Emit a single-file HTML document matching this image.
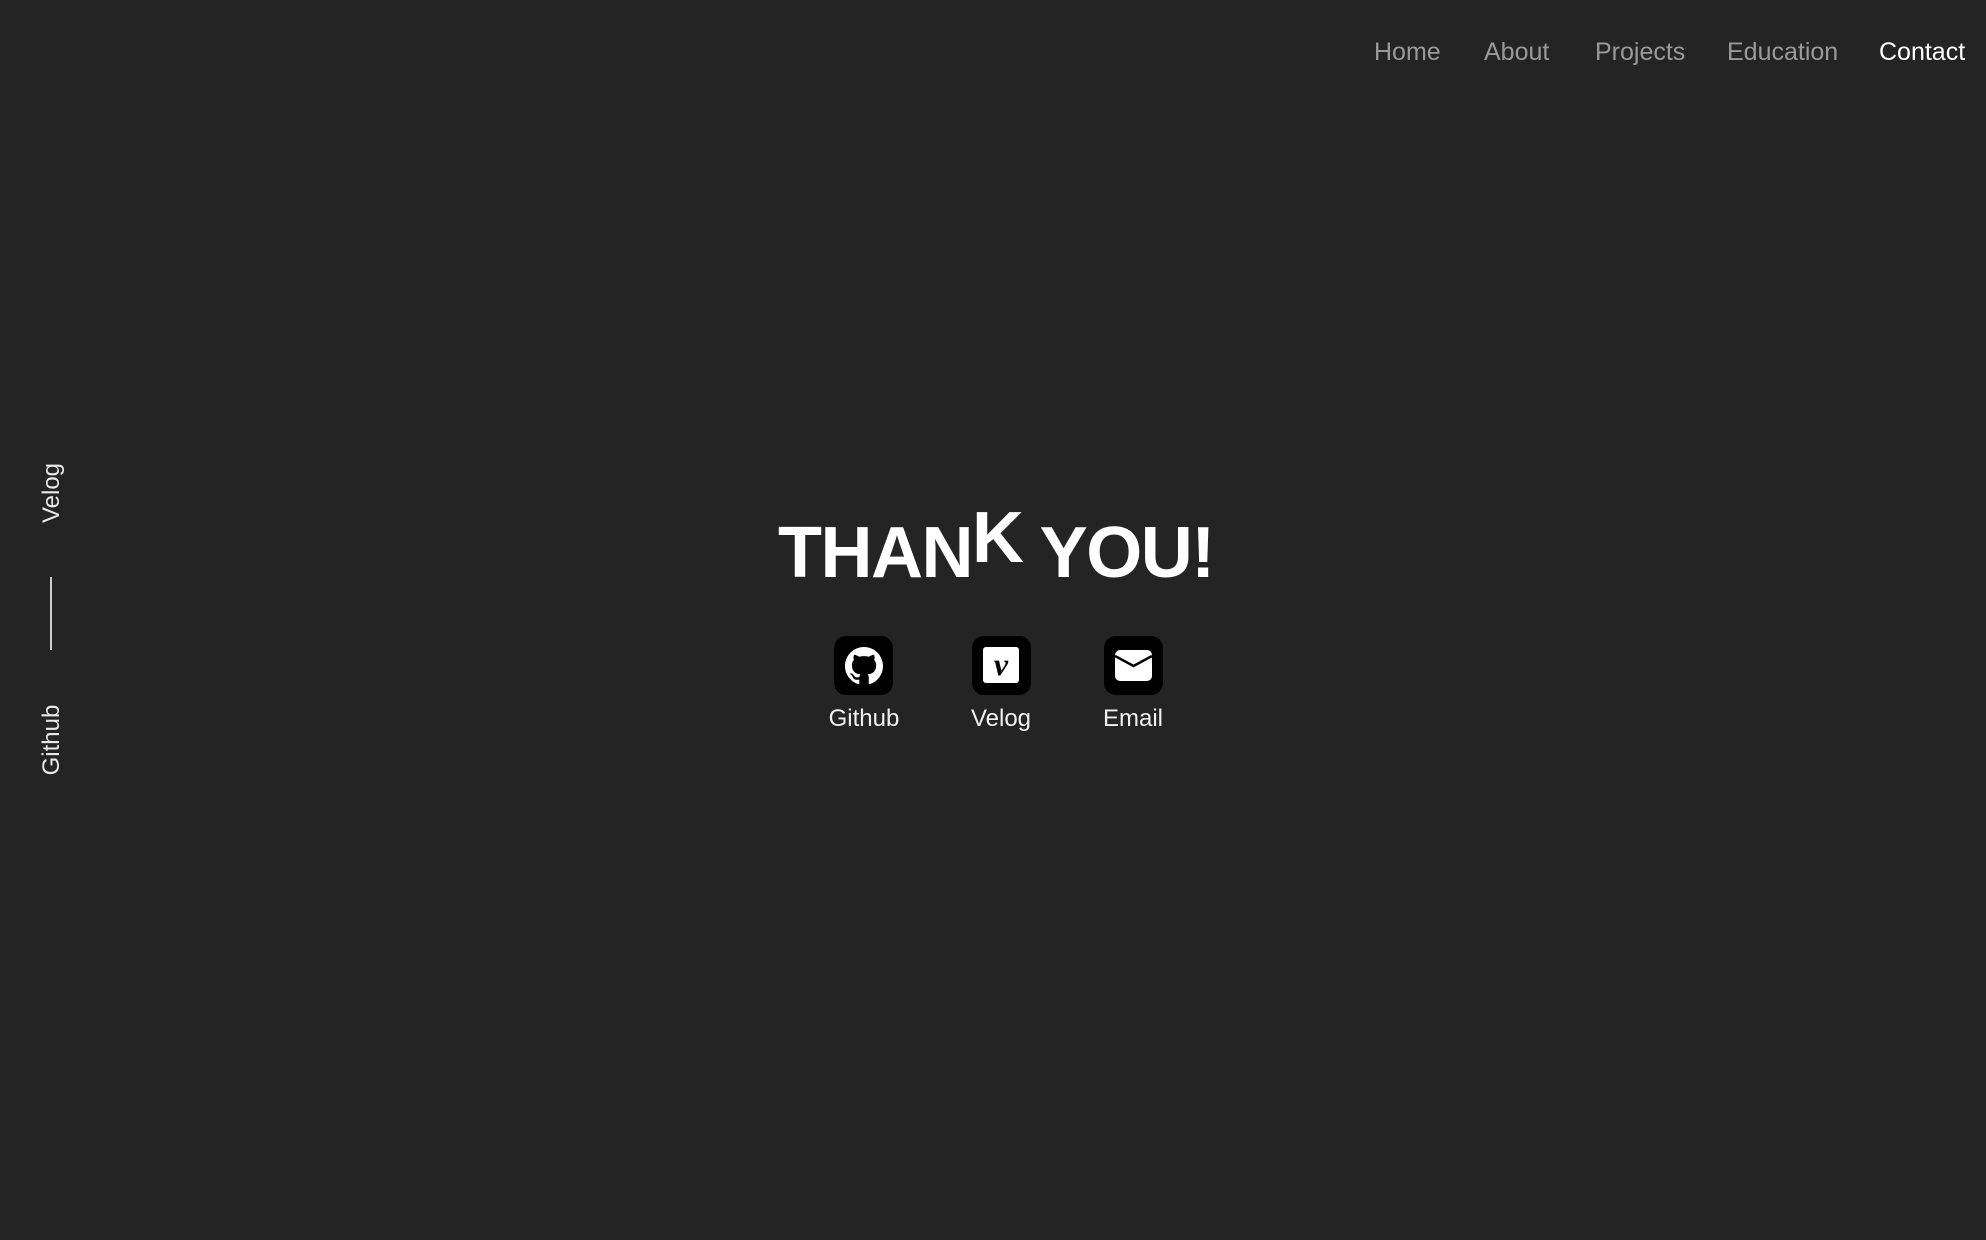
<!DOCTYPE html>
<html><head><meta charset="utf-8"><style>
html,body{margin:0;padding:0;}
body{width:1986px;height:1240px;background:#242424;position:relative;overflow:hidden;font-family:"Liberation Sans",sans-serif;}
.a{position:absolute;white-space:nowrap;line-height:24px;font-size:24px;}
.nav{top:40px;color:#9a9a9a;font-size:25px;line-height:25px;}
.rot{transform:translate(-50%,-50%) rotate(-90deg);color:#e8e8e8;}
.title{position:absolute;left:778px;top:517px;font-size:72px;line-height:72px;font-weight:bold;color:#fff;letter-spacing:-1.5px;white-space:nowrap;}
.box{position:absolute;top:636px;width:59px;height:59px;background:#000;border-radius:12px;}
.lbl{position:absolute;top:707px;color:#f0f0f0;font-size:24px;line-height:24px;transform:translateX(-50%);white-space:nowrap;}
</style></head><body>
<div class="a nav" style="left:1374px">Home</div>
<div class="a nav" style="left:1484px">About</div>
<div class="a nav" style="left:1595px">Projects</div>
<div class="a nav" style="left:1727px">Education</div>
<div class="a nav" style="left:1879px;color:#fff">Contact</div>

<div class="a rot" style="left:52px;top:493px">Velog</div>
<div style="position:absolute;left:50px;top:577px;width:2px;height:73px;background:#ccc"></div>
<div class="a rot" style="left:52px;top:740px">Github</div>

<div class="title">THAN<span style="position:relative;top:-15px">K</span> YOU!</div>

<div class="box" style="left:834px">
<svg style="position:absolute;left:11px;top:11px" width="38" height="38" viewBox="0 0 16 16"><path fill="#fff" d="M8 0C3.58 0 0 3.58 0 8c0 3.54 2.290 6.53 5.47 7.59.4.07.55-.17.55-.38 0-.19-.01-.82-.01-1.49-2.01.37-2.53-.49-2.69-.94-.09-.23-.48-.94-.82-1.130-.28-.15-.68-.52-.01-.53.63-.01 1.08.58 1.23.82.72 1.21 1.87.87 2.33.66.07-.52.28-.87.51-1.07-1.78-.2-3.64-.89-3.64-3.95 0-.87.31-1.59.82-2.15-.08-.2-.36-1.02.08-2.12 0 0 .67-.21 2.2.82.64-.18 1.32-.27 2-.27.68 0 1.36.09 2 .27 1.53-1.04 2.2-.82 2.2-.82.44 1.1.16 1.92.08 2.12.51.56.82 1.27.82 2.15 0 3.07-1.87 3.75-3.65 3.95.29.25.54.73.54 1.48 0 1.07-.01 1.93-.01 2.2 0 .21.15.46.55.38A8.013 8.013 0 0016 8c0-4.42-3.58-8-8-8z"/></svg>
</div>
<div class="box" style="left:972px">
<div style="position:absolute;left:11px;top:11px;width:36px;height:36px;background:#fff;border-radius:3px;color:#000;font-family:'Liberation Serif',serif;font-style:italic;font-weight:bold;font-size:32px;line-height:34px;text-align:center">v</div>
</div>
<div class="box" style="left:1104px">
<svg style="position:absolute;left:11px;top:14px" width="37" height="31" viewBox="0 0 37 31"><rect x="0" y="0" width="37" height="31" rx="5" fill="#fff"/><path d="M0 6 L18.5 16 L37 6" fill="none" stroke="#000" stroke-width="2.5"/></svg>
</div>

<div class="lbl" style="left:864px">Github</div>
<div class="lbl" style="left:1001px">Velog</div>
<div class="lbl" style="left:1133px">Email</div>
</body></html>
